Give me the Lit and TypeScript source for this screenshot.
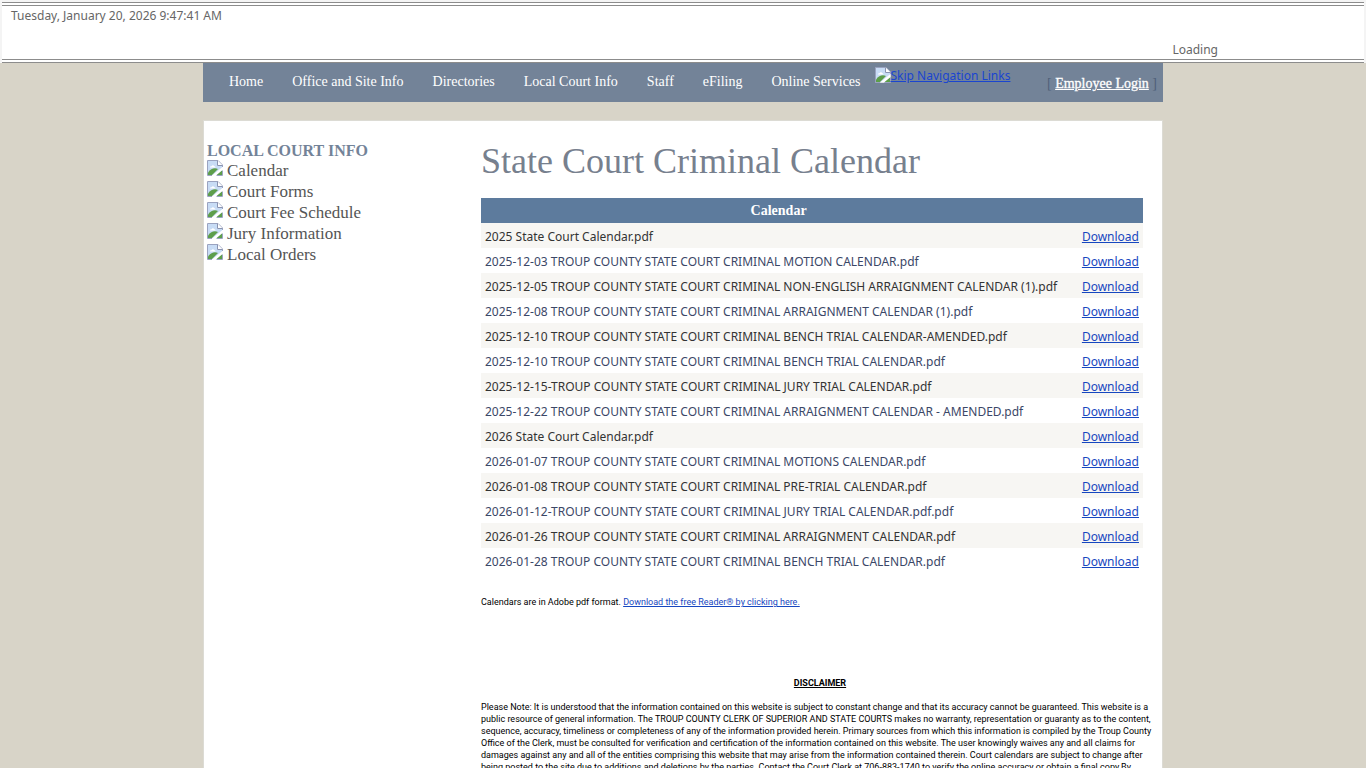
import { LitElement, html, css } from "lit";
import { customElement } from "lit/decorators.js";

const NAV = ["Home", "Office and Site Info", "Directories", "Local Court Info", "Staff", "eFiling", "Online Services"];

const SIDE = ["Calendar", "Court Forms", "Court Fee Schedule", "Jury Information", "Local Orders"];

const FILES = [
  "2025 State Court Calendar.pdf",
  "2025-12-03 TROUP COUNTY STATE COURT CRIMINAL MOTION CALENDAR.pdf",
  "2025-12-05 TROUP COUNTY STATE COURT CRIMINAL NON-ENGLISH ARRAIGNMENT CALENDAR (1).pdf",
  "2025-12-08 TROUP COUNTY STATE COURT CRIMINAL ARRAIGNMENT CALENDAR (1).pdf",
  "2025-12-10 TROUP COUNTY STATE COURT CRIMINAL BENCH TRIAL CALENDAR-AMENDED.pdf",
  "2025-12-10 TROUP COUNTY STATE COURT CRIMINAL BENCH TRIAL CALENDAR.pdf",
  "2025-12-15-TROUP COUNTY STATE COURT CRIMINAL JURY TRIAL CALENDAR.pdf",
  "2025-12-22 TROUP COUNTY STATE COURT CRIMINAL ARRAIGNMENT CALENDAR - AMENDED.pdf",
  "2026 State Court Calendar.pdf",
  "2026-01-07 TROUP COUNTY STATE COURT CRIMINAL MOTIONS CALENDAR.pdf",
  "2026-01-08 TROUP COUNTY STATE COURT CRIMINAL PRE-TRIAL CALENDAR.pdf",
  "2026-01-12-TROUP COUNTY STATE COURT CRIMINAL JURY TRIAL CALENDAR.pdf.pdf",
  "2026-01-26 TROUP COUNTY STATE COURT CRIMINAL ARRAIGNMENT CALENDAR.pdf",
  "2026-01-28 TROUP COUNTY STATE COURT CRIMINAL BENCH TRIAL CALENDAR.pdf",
];

const DISCLAIMER = [
  "Please Note: It is understood that the information contained on this website is subject to constant change and that its accuracy cannot be guaranteed. This website is a",
  "public resource of general information. The TROUP COUNTY CLERK OF SUPERIOR AND STATE COURTS makes no warranty, representation or guaranty as to the content,",
  "sequence, accuracy, timeliness or completeness of any of the information provided herein. Primary sources from which this information is compiled by the Troup County",
  "Office of the Clerk, must be consulted for verification and certification of the information contained on this website. The user knowingly waives any and all claims for",
  "damages against any and all of the entities comprising this website that may arise from the information contained therein. Court calendars are subject to change after",
  "being posted to the site due to additions and deletions by the parties. Contact the Court Clerk at 706-883-1740 to verify the online accuracy or obtain a final copy.By",
];

@customElement("missing-picture")
class MissingPicture extends LitElement {
  static styles = css`
    :host {
      display: inline-block;
      width: 16px;
      height: 16px;
    }
    svg {
      display: block;
    }
  `;

  render() {
    return html`
      <svg width="16" height="16" viewBox="0 0 16 16" aria-hidden="true">
        <path d="M.5.5H11L15.500 5V15.500H.5Z" fill="#fff" />
        <path d="M1 1h9.500v5H15v9H1Z" fill="#c8dcf5" />
        <path d="M3 7.500c0-1 .8-1.500 1.600-1.300C5 5 6.800 5 7.200 6.200c1 0 1.300.6 1.300 1.300Z" fill="#fff" />
        <path d="M1 15v-2.500c3-4 6.500-5 10-3.500l-6 6Z" fill="#5d9e4b" />
        <path d="M9 15l6-5V15Z" fill="#5d9e4b" />
        <path d="M5 15.500L15.500 7v3L9 15.500Z" fill="#fff" />
        <path d="M.5 15.500V.5H11L15.500 5v2M15.500 10.500v5H9.500M5 15.500H.5" fill="none" stroke="#9aa3c0" />
        <path d="M10.500.5v5h5" fill="#fff" stroke="#8a93b0" />
      </svg>
    `;
  }
}

@customElement("app-root")
class AppRoot extends LitElement {
  static styles = css`
    :host {
      display: block;
      min-height: 100vh;
      background: #d8d4c8;
      color: #666;
      font: 12px/18px "Noto Sans", "Open Sans", sans-serif;
      --antiqua: "Liberation Serif", serif;
      --link: #1747c0;
    }
    .frame {
      background: #f4f4f4;
      padding: 2px 2px 0;
    }
    .status {
      display: flex;
      justify-content: space-between;
      height: 52px;
      padding: 1px 146px 0 9px;
      background: #fff;
      border: 4px double #8c8c8c;
      border-width: 4px 0;
    }
    .loading {
      align-self: flex-end;
    }
    .page {
      max-width: 960px;
      margin: 0 auto;
    }
    .bar {
      display: flex;
      height: 39px;
      background: #738398;
    }
    .menu {
      display: flex;
      flex: none;
      margin: 0;
      padding: 0 0 0 11px;
      list-style: none;
      font: 14px/38px var(--antiqua);
    }
    .menu a {
      display: block;
      padding: 0 14px 0 15px;
      color: #fff;
      text-decoration: none;
    }
    .skip {
      display: flex;
      align-items: flex-start;
      padding: 4px 0;
      color: #1a45d0;
      white-space: nowrap;
    }
    .login {
      margin-left: auto;
      padding: 0 6px;
      color: #4f6078;
      font: 14px/42px var(--antiqua);
      white-space: nowrap;
    }
    .login a {
      color: #fff;
      -webkit-text-stroke: 0.3px #fff;
    }
    .panel {
      display: flex;
      margin-top: 18px;
      min-height: calc(100vh - 121px);
      background: #fff;
      border: 1px solid #dcdbd4;
      border-bottom: 0;
    }
    .side {
      flex: none;
      width: 273px;
      padding: 20px 0 0 3px;
      box-sizing: border-box;
      font: 17px/21px var(--antiqua);
    }
    .side h2 {
      margin: 0;
      color: #738398;
      font: bold 16px/19px var(--antiqua);
    }
    .side ul {
      margin: 0;
      padding: 0;
      list-style: none;
    }
    .side li {
      height: 21px;
    }
    .side a {
      display: flex;
      gap: 4px;
      color: #555;
      text-decoration: none;
    }
    .main {
      flex: 1;
      min-width: 0;
      padding: 18px 3px 0 4px;
      font: 9px/12px Roboto, sans-serif;
      color: #000;
    }
    h1 {
      margin: 0;
      color: #77808e;
      font: 36px/44px var(--antiqua);
    }
    .files {
      width: 662px;
      max-width: 100%;
      margin-top: 15px;
      border-collapse: collapse;
      font: 12px/19px "Noto Sans", "Open Sans", sans-serif;
      color: #3b4767;
    }
    .files th {
      background: #5d7b9d;
      color: #fff;
      font: bold 14px/19px var(--antiqua);
      padding: 3px 4px;
    }
    .files td {
      padding: 4px 4px 2px;
      white-space: nowrap;
    }
    .files tbody tr:nth-child(odd) {
      background: #f7f6f3;
      color: #333;
    }
    .get {
      text-align: right;
    }
    a {
      color: var(--link);
    }
    .note {
      margin: 23px 0 0;
    }
    .rule {
      margin: 69px 0 12px;
      text-align: center;
      font-size: 9px;
      line-height: 12px;
      text-decoration: underline;
    }
    .legal {
      margin: 0;
      white-space: nowrap;
    }
  `;

  render() {
    return html`
      <div class="frame">
        <header class="status">
          <span>Tuesday, January 20, 2026 9:47:41 AM</span>
          <span class="loading">Loading</span>
        </header>
      </div>
      <div class="page">
        <nav class="bar">
          <ul class="menu">
            ${NAV.map((n) => html`<li><a href="#">${n}</a></li>`)}
          </ul>
          <a class="skip" href="#main"><missing-picture></missing-picture>Skip Navigation Links</a>
          <span class="login">[ <a href="#">Employee Login</a> ]</span>
        </nav>
        <div class="panel">
          <aside class="side">
            <h2>LOCAL COURT INFO</h2>
            <ul>
              ${SIDE.map((s) => html`<li><a href="#"><missing-picture></missing-picture>${s}</a></li>`)}
            </ul>
          </aside>
          <main class="main" id="main">
            <h1>State Court Criminal Calendar</h1>
            <table class="files">
              <thead>
                <tr><th>Calendar</th><th></th></tr>
              </thead>
              <tbody>
                ${FILES.map((f) => html`<tr><td>${f}</td><td class="get"><a href="#">Download</a></td></tr>`)}
              </tbody>
            </table>
            <p class="note">Calendars are in Adobe pdf format. <a href="#">Download the free Reader® by clicking here.</a></p>
            <h3 class="rule">DISCLAIMER</h3>
            <p class="legal">${DISCLAIMER.map((l) => html`${l}<br />`)}</p>
          </main>
        </div>
      </div>
    `;
  }
}
